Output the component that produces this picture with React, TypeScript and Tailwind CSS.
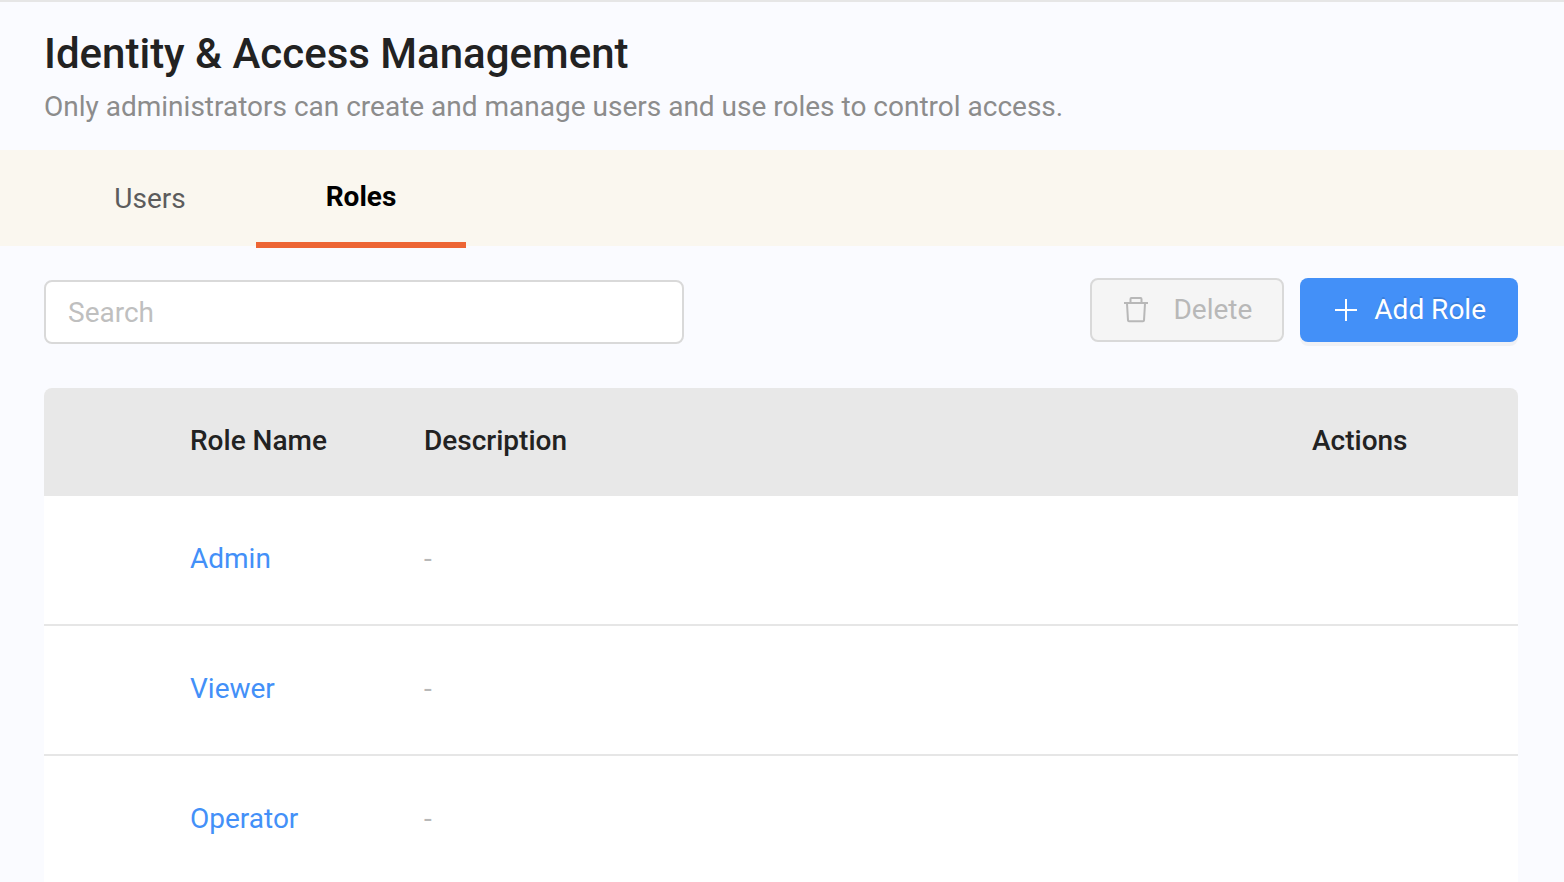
const roles = [
  { name: 'Admin', description: '-' },
  { name: 'Viewer', description: '-' },
  { name: 'Operator', description: '-' },
];

function TrashIcon() {
  return (
    <svg viewBox="0 0 28 28" className="size-7" fill="none" stroke="currentColor" strokeWidth="2" aria-hidden="true">
      <path d="M8.500 7V3q0-.9.900-.9h9.200q.9 0 .9.900v4" />
      <path d="M2 7h24" />
      <path d="M5 7.500l1 16.800q.1.900 1 .9h14q.9 0 1-.9l1-16.800" />
    </svg>
  );
}

function PlusIcon() {
  return (
    <svg viewBox="0 0 28 28" className="size-7" fill="none" stroke="currentColor" strokeWidth="2" aria-hidden="true">
      <path d="M14 3v22M3 14h22" />
    </svg>
  );
}

export default function App() {
  return (
    <div className="min-h-screen border-t-2 border-[#e6e6e6] bg-[#fafbff] font-['Roboto',sans-serif] text-[28px] leading-[34px] text-[#222222]">
      <header className="px-11 pt-7 pb-[26px]">
        <h1 className="text-[42px] leading-12 font-medium">Identity &amp; Access Management</h1>
        <p className="mt-3 text-[#8c8c8c]">Only administrators can create and manage users and use roles to control access.</p>
      </header>
      <nav className="flex h-24 bg-[#faf7ef] pl-11">
        <a href="#users" className="flex h-24 w-53 items-center justify-center pt-0.5 text-[#5c5c5c]">Users</a>
        <a href="#roles" aria-current="page" className="flex h-[98px] w-[210px] items-center justify-center border-b-6 border-[#ed6534] pt-0.5 font-bold text-black">Roles</a>
      </nav>
      <main className="pt-8 pr-[46px] pl-11">
        <div className="flex items-start gap-4">
          <input type="search" aria-label="Search" placeholder="Search" className="mt-0.5 h-16 w-160 rounded-lg border-2 border-[#d9d9d9] bg-white px-[22px] outline-none placeholder:text-[#bfbfbf]" />
          <button type="button" disabled className="ml-auto flex h-16 items-center gap-[23px] rounded-lg border-2 border-[#d9d9d9] bg-[#f5f5f5] px-[30px] text-[#b8b8b8]">
            <TrashIcon />
            Delete
          </button>
          <button type="button" className="flex h-16 items-center gap-3.5 rounded-lg bg-[#4390f8] px-8 text-white shadow-[0_4px_0_rgba(0,0,0,0.04)] [text-shadow:0_-2px_0_rgba(0,0,0,0.12)]">
            <PlusIcon />
            Add Role
          </button>
        </div>
        <table className="mt-11 w-full table-fixed border-separate border-spacing-0 overflow-hidden rounded-t-lg bg-white text-left">
          <thead className="h-27 bg-[#e8e8e8]">
            <tr>
              <td className="w-[146px]" />
              <th className="w-[234px] pb-0.5 font-medium">Role Name</th>
              <th className="pb-0.5 font-medium">Description</th>
              <th className="w-[206px] pb-0.5 font-medium">Actions</th>
            </tr>
          </thead>
          <tbody className="[&_td]:border-b-2 [&_td]:border-[#e6e6e6] [&_td]:pb-0.5">
            {roles.map((role) => (
              <tr key={role.name} className="h-[130px]">
                <td />
                <td><a href="#role" className="text-[#4390f8]">{role.name}</a></td>
                <td className="text-[#b8b8b8]">{role.description}</td>
                <td />
              </tr>
            ))}
          </tbody>
        </table>
      </main>
    </div>
  );
}
